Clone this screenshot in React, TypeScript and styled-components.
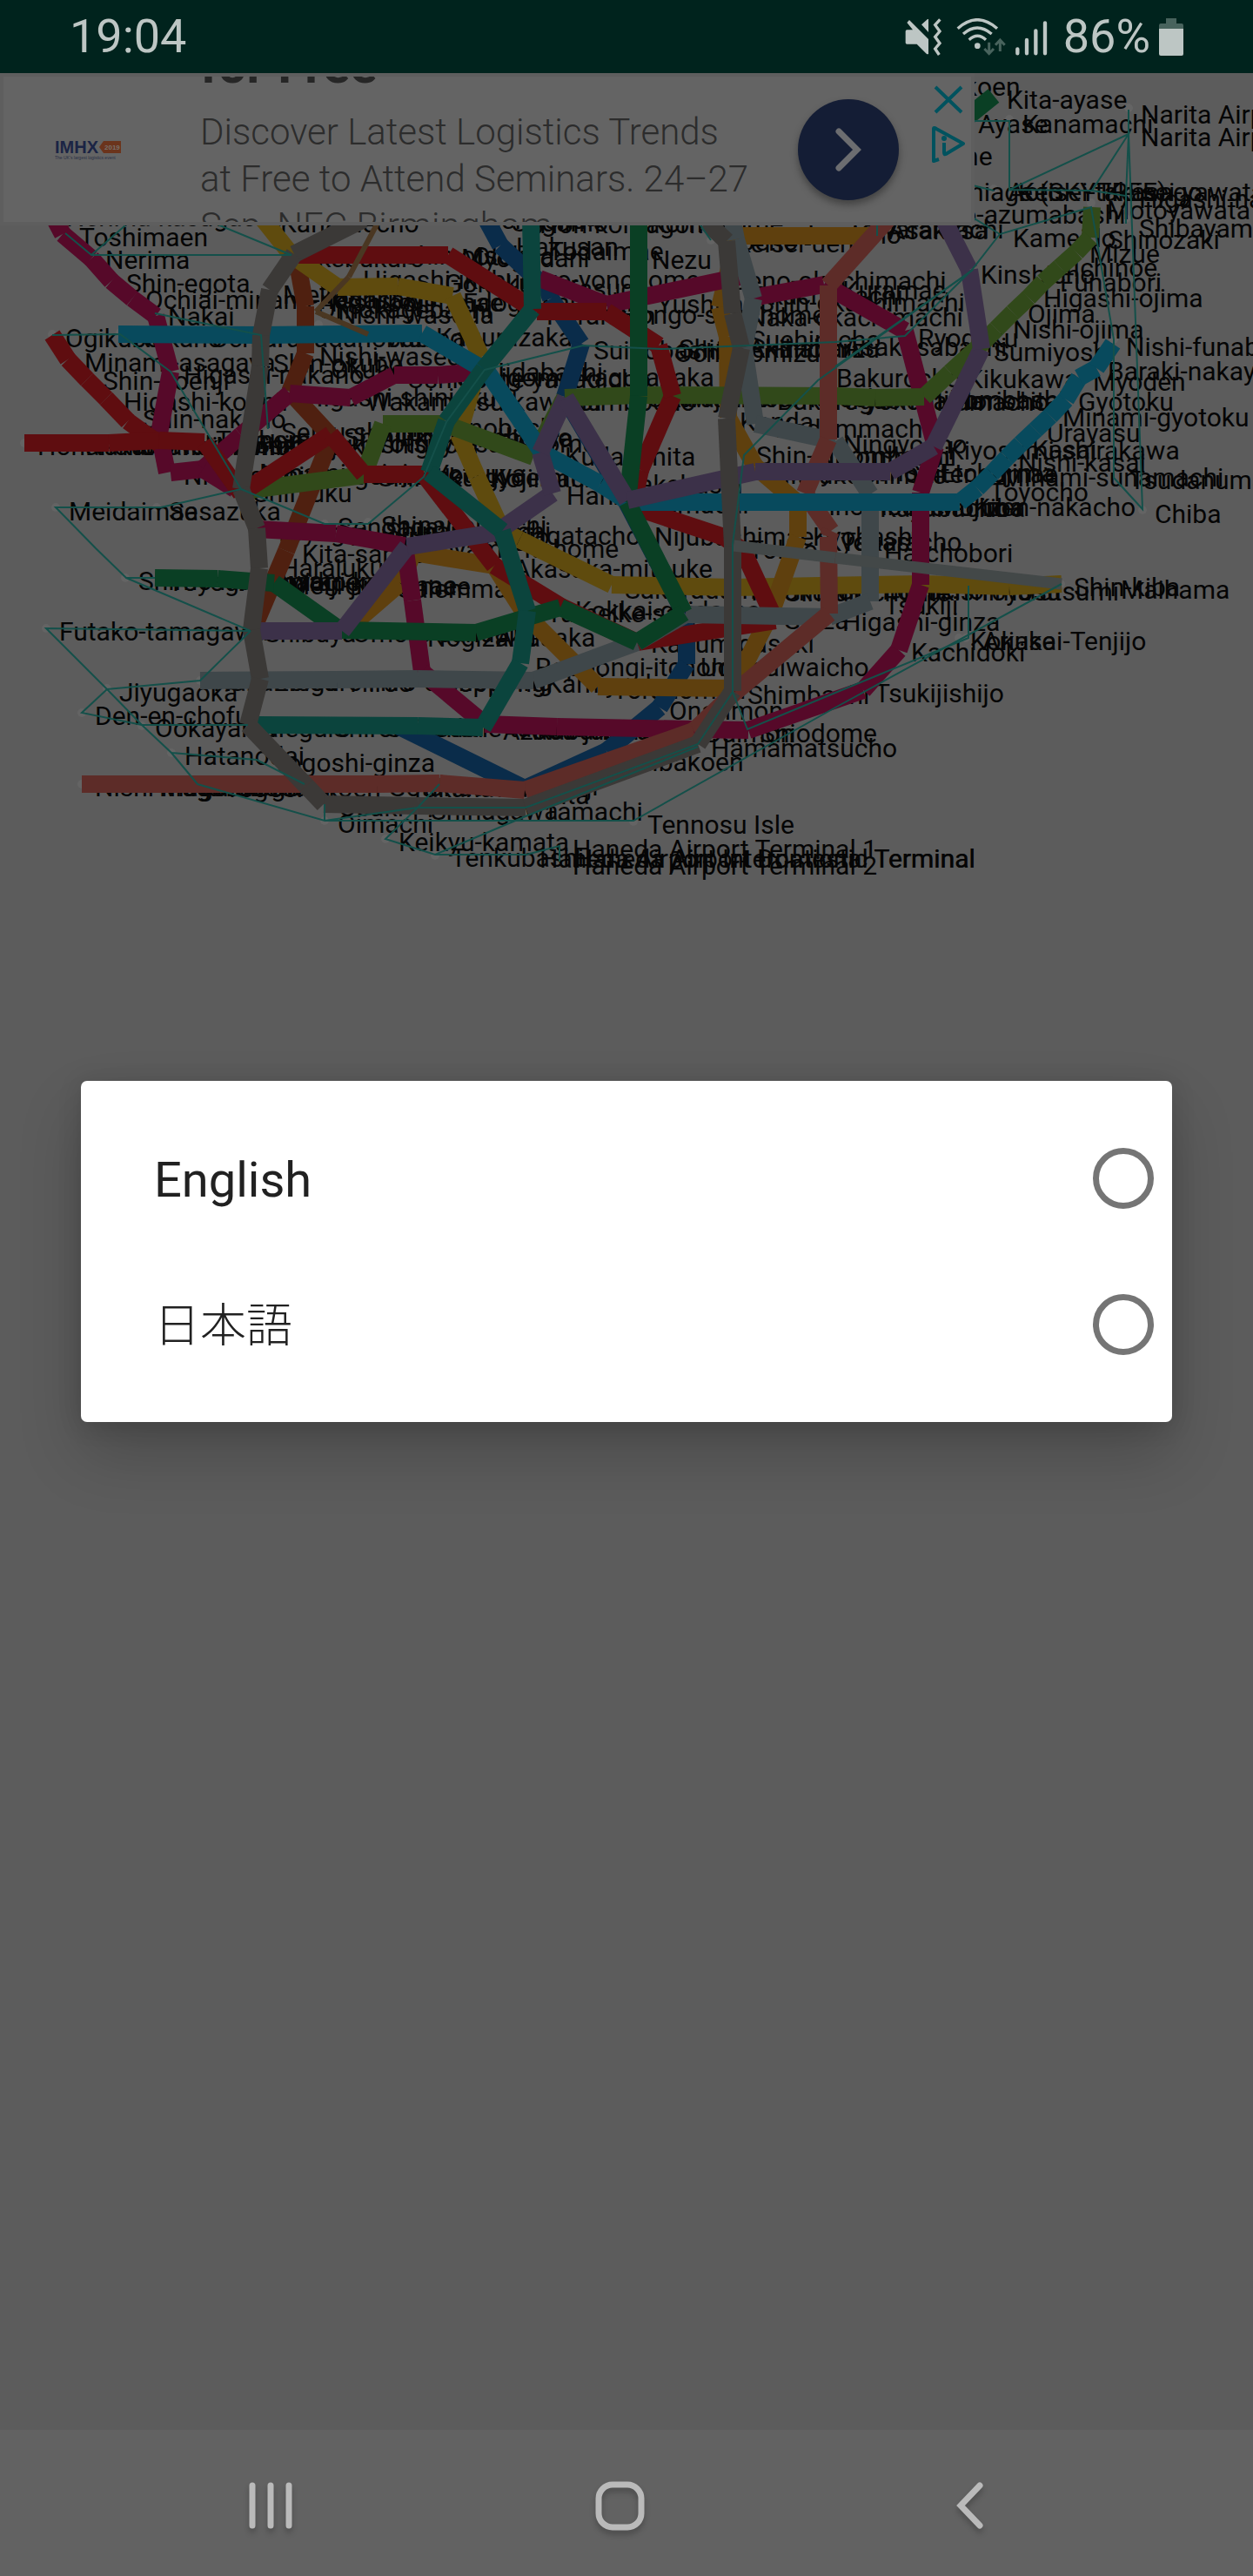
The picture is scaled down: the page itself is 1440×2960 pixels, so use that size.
import React, { useState } from "react";
import styled, { createGlobalStyle } from "styled-components";

const GlobalStyle = createGlobalStyle`
  *, *::before, *::after { box-sizing: border-box; }
  body { margin: 0; background: #5c5c5c; font-family: Roboto, "Noto Sans CJK JP", sans-serif; }
`;

const Screen = styled.div`
  display: flex;
  flex-direction: column;
  min-height: 100vh;
  overflow: hidden;
`;

const StatusBar = styled.header`
  display: flex;
  align-items: center;
  justify-content: space-between;
  height: 84px;
  padding: 0 80px;
  background: #00231d;
  color: #bdc6c4;
  font-size: 54px;
  line-height: 64px;
`;

const StatusGroup = styled.div`
  display: flex;
  align-items: center;
  gap: 10px;
`;

const Main = styled.main`
  position: relative;
  flex: 1;
  display: flex;
  flex-direction: column;
  justify-content: center;
`;

const MapLayer = styled.div`
  position: absolute;
  inset: 0;
  overflow: hidden;
`;

const MapSvg = styled.svg`
  display: block;
  width: 100%;
  height: auto;
`;

const MapLabel = styled.text`
  font: 400 30px Roboto, sans-serif;
  fill: #050505;
`;

const Banner = styled.aside`
  position: absolute;
  top: 0;
  left: 0;
  width: 1120px;
  padding: 4px;
  background: #5e5e5e;
`;

const Creative = styled.div`
  display: flex;
  align-items: center;
  height: 167px;
  padding: 0 6px 0 59px;
  overflow: hidden;
  background: #646464;
`;

const Copy = styled.div`
  display: flex;
  flex: 1;
  flex-direction: column;
  justify-content: center;
  gap: 18px;
  height: 167px;
  margin-left: 91px;
  padding-bottom: 14px;
`;

const AdTitle = styled.h2`
  flex: none;
  margin: 0;
  color: #262626;
  font-size: 58px;
  font-weight: 700;
  line-height: 64px;
`;

const AdText = styled.p`
  flex: none;
  margin: 0;
  color: #2c2c2c;
  font-size: 42px;
  font-weight: 300;
  line-height: 54px;
  white-space: nowrap;
`;

const CallButton = styled.button`
  display: grid;
  place-items: center;
  width: 116px;
  height: 116px;
  padding: 0;
  border: 0;
  border-radius: 50%;
  background: #141d35;
  box-shadow: 0 5px 8px rgba(0, 0, 0, 0.35);
`;

const AdTools = styled.div`
  display: flex;
  flex-direction: column;
  align-self: flex-start;
  align-items: center;
  gap: 14px;
  margin-left: 37px;
  padding-top: 10px;
`;

const PlainButton = styled.button`
  display: grid;
  place-items: center;
  padding: 0;
  border: 0;
  background: none;
`;

const Dialog = styled.form`
  position: relative;
  margin: 0 93px;
  padding: 28px 0;
  border-radius: 7px;
  background: #fff;
  box-shadow: 0 36px 72px rgba(0, 0, 0, 0.2), 0 4px 28px rgba(0, 0, 0, 0.14);
`;

const Option = styled.label`
  display: flex;
  align-items: center;
  justify-content: space-between;
  height: 168px;
  padding: 4px 21px 0 84px;
  color: #212121;
  font-size: 56px;
  line-height: 64px;

  &:lang(ja) {
    font-size: 53px;
    font-weight: 300;
  }
`;

const Radio = styled.input`
  appearance: none;
  width: 70px;
  height: 70px;
  margin: 0 0 4px;
  border: 7px solid #757575;
  border-radius: 50%;
  background: #fff;
  &:checked { background: radial-gradient(#757575 0 16px, #fff 17px); }
`;

const NavBar = styled.nav`
  display: flex;
  height: 168px;
  padding: 0 125px 0 110px;
  background: #626262;
`;

const NavButton = styled(PlainButton)`
  flex: 1;
  padding-top: 6px;
  svg { filter: drop-shadow(0 5px 3px rgba(0, 0, 0, 0.22)); overflow: visible; }
`;

type Points = number[][];
type Line = { color: string; width?: number; runs: Points[] };

const lines: Line[] = [
  { color: "#0a2c4a", runs: [[[555, 245], [575, 282], [629, 332], [633, 343], [668, 395], [649, 456], [720, 577], [786, 704], [789, 735], [789, 763], [758, 813], [697, 863], [603, 906], [457, 834]]] },
  { color: "#4f2010", runs: [[[341, 298], [351, 352], [351, 406], [333, 450], [381, 502], [329, 633], [290, 725]]] },
  { color: "#5f4b0e", runs: [[[297, 245], [335, 293], [388, 330], [457, 329], [520, 340], [553, 410], [527, 499], [548, 547], [577, 610], [597, 620], [703, 672], [843, 675], [943, 673], [1060, 671], [1160, 674], [1220, 671]]] },
  { color: "#5f400e", runs: [[[1008, 271], [847, 271], [827, 353], [836, 387], [837, 480], [868, 536], [917, 578], [917, 617], [886, 705], [842, 791], [687, 789], [603, 705], [568, 650], [475, 635], [460, 670], [394, 727]]] },
  { color: "#560929", runs: [
    [[62, 250], [72, 269], [105, 297], [128, 323], [152, 343], [179, 363], [196, 427], [183, 498], [192, 543]],
    [[196, 543], [233, 539], [277, 500], [333, 452], [403, 457], [453, 431], [503, 431], [555, 427]],
    [[233, 539], [270, 562]],
    [[295, 608], [386, 613], [465, 627], [474, 690], [485, 772], [557, 832], [640, 835], [795, 838], [860, 839], [992, 793], [1033, 747], [1058, 672], [1058, 566], [1075, 513], [1040, 380], [947, 327], [860, 343]],
    [[620, 320], [697, 350], [850, 318]],
  ] },
  { color: "#31491a", runs: [
    [[1255, 238], [1253, 273], [1237, 290], [1218, 307], [1199, 324], [1182, 342], [1164, 359], [1145, 378], [1123, 400], [1092, 428], [1062, 456], [1006, 457], [960, 455], [735, 454], [649, 457], [613, 525], [511, 487], [440, 487], [418, 546], [287, 563]],
  ] },
  { color: "#5f0d10", runs: [
    [[60, 385], [78, 413], [100, 436], [122, 458], [147, 484], [183, 510]],
    [[28, 509], [125, 509], [183, 506], [235, 508], [277, 567], [380, 499], [418, 545], [487, 545], [568, 650], [645, 697], [732, 738], [891, 713], [854, 633], [832, 617], [727, 582], [736, 540], [773, 455], [757, 397], [697, 358], [617, 358], [515, 293], [343, 293]],
  ] },
  { color: "#3f474a", runs: [[[841, 250], [846, 275], [866, 343], [855, 400], [868, 487], [960, 507], [1000, 568], [1000, 691], [953, 709], [788, 706], [732, 738], [613, 782], [480, 780], [387, 781], [230, 782]]] },
  { color: "#5d2c28", runs: [[[1022, 250], [952, 328], [952, 505], [925, 567], [955, 610], [952, 617], [953, 705], [845, 795], [797, 840], [603, 908], [505, 900], [433, 901], [94, 901]]] },
  { color: "#084a5d", runs: [[[136, 384], [300, 385], [485, 383], [560, 427], [623, 520], [690, 556], [723, 577], [860, 577], [1103, 577], [1123, 561], [1140, 544], [1157, 526], [1173, 510], [1190, 494], [1207, 478], [1225, 459], [1240, 434], [1260, 423], [1279, 395]]] },
  { color: "#0a3f24", runs: [
    [[1142, 110], [1090, 152]],
    [[734, 250], [734, 455], [721, 577], [786, 704], [732, 738], [644, 698], [547, 727], [391, 724], [315, 670], [250, 665], [178, 664]],
  ] },
  { color: "#3c3149", runs: [[[299, 725], [393, 725], [468, 628], [570, 612], [635, 567], [621, 520], [650, 457], [721, 575], [868, 542], [1023, 542], [1073, 513], [1128, 401], [1114, 310], [1086, 255]]] },
  { color: "#0b443d", runs: [[[610, 250], [612, 355], [556, 424], [513, 484], [493, 543], [577, 610], [606, 702], [598, 762], [555, 836], [480, 834], [295, 833]]] },
  { color: "#3b3937", runs: [[[418, 252], [338, 292], [310, 333], [300, 385], [299, 421], [277, 562], [295, 607], [298, 653], [289, 724], [299, 780], [285, 833], [352, 903], [372, 924], [480, 926], [604, 928], [802, 855], [842, 794], [842, 628], [835, 481], [852, 400], [842, 360], [835, 277], [812, 255]]] },
  { color: "#434848", width: 13, runs: [[[843, 627], [960, 641], [1220, 671]]] },
  { color: "#4a3722", width: 6, runs: [[[434, 256], [401, 318], [363, 358], [423, 384]]] },
];

const links: Points[] = [
  [[75, 268], [105, 293], [144, 259]],
  [[105, 293], [335, 293], [250, 258]],
  [[178, 360], [300, 385], [308, 493]],
  [[60, 385], [138, 384], [196, 427], [277, 562], [185, 583], [64, 583], [110, 630], [145, 664], [178, 664]],
  [[145, 664], [288, 725], [53, 722], [123, 792], [230, 782], [288, 725]],
  [[123, 792], [94, 819], [163, 833], [285, 833]],
  [[123, 792], [163, 833], [197, 865], [295, 873], [350, 901]],
  [[197, 865], [227, 901], [373, 943], [373, 924]],
  [[373, 943], [480, 928], [443, 964], [500, 982], [604, 938], [802, 858]],
  [[373, 943], [728, 943], [960, 813], [1220, 671]],
  [[505, 901], [480, 928], [604, 928], [802, 855], [842, 795], [842, 625], [855, 523], [940, 437], [1118, 310]],
  [[500, 982], [605, 982], [643, 972], [643, 990]],
  [[277, 562], [373, 602], [423, 602], [487, 548], [513, 485], [557, 425], [670, 397], [760, 401], [960, 393], [1040, 386], [1117, 310], [1149, 269], [1254, 238], [1280, 390], [1280, 549], [1313, 585], [1297, 154], [1297, 126]],
  [[960, 421], [1118, 310]],
  [[1149, 269], [1118, 250]],
  [[842, 795], [859, 838], [960, 796], [1113, 733], [1113, 673]],
  [[1120, 139], [1160, 139], [1160, 218], [1297, 154], [1255, 219], [1160, 218]],
  [[1255, 219], [1294, 225], [1294, 257]],
  [[1294, 225], [1297, 154]],
  [[1118, 213], [1142, 219]],
  [[803, 256], [817, 276]],
  [[1008, 256], [1008, 271]],
];

const dots: Points = [
  [60, 384], [138, 382], [28, 509], [64, 583], [180, 583], [308, 496], [144, 664], [53, 722], [123, 791], [94, 819], [163, 834], [197, 865], [94, 901], [230, 782],
  [373, 943], [443, 964], [500, 983], [728, 944], [817, 276], [1297, 124], [1160, 137], [1254, 233], [1142, 217], [1149, 267], [1294, 251], [1280, 390], [1280, 527], [1313, 586],
  [1102, 733], [1110, 733], [1219, 671], [1160, 671], [373, 602], [423, 600], [366, 373],
];

/* Station name, left edge, baseline. */
const labels: [string, number, number][] = [
  ["Nerima-kasugacho", 78, 260], ["Toshimaen", 93, 283], ["Nerima", 123, 309], ["Shin-egota", 147, 336], ["Ochiai-minami-nagasaki", 169, 355], ["Nakai", 195, 374],
  ["Ogikubo", 77, 399], ["Nakano", 155, 399], ["Ochiai", 244, 399], ["Takadanobaba", 315, 399], ["Waseda", 445, 399], ["Kanamecho", 324, 267], ["Ikebukuro", 359, 307],
  ["Minami-asagaya", 99, 427], ["Shin-koenji", 120, 448], ["Higashi-nakano", 213, 441], ["Higashi-koenji", 144, 472], ["Shin-nakano", 166, 492],
  ["Shin-okubo", 316, 428], ["Okubo", 382, 435], ["Nishi-waseda", 369, 420], ["Higashi-shinjuku", 352, 467], ["Wakamatsu-kawada", 423, 472],
  ["Honancho", 45, 523], ["Nakano-fujimicho", 100, 523], ["Nakano-shimbashi", 142, 523], ["Nakano-sakaue", 200, 522], ["Tochomae", 250, 516], ["Nishi-shinjuku", 250, 523], ["Shinjuku-nishiguchi", 294, 521],
  ["Seibu-shinjuku", 325, 507], ["Shinjuku-sanchome", 397, 513], ["Shinjuku-gyoemmae", 436, 559], ["Nishi-shinjuku-gochome", 213, 557], ["Shinjuku", 293, 577],
  ["Meidaimae", 81, 598], ["Sasazuka", 196, 598], ["Yoyogi", 317, 622], ["Sendagaya", 390, 616], ["Shinanomachi", 440, 614], ["Kokuritsu-kyogijo", 404, 627], ["Minami-shinjuku", 300, 554],
  ["Mejiro", 327, 349], ["Zoshigaya", 368, 352], ["Kishibojimmae", 382, 358], ["Higashi-ikebukuro-yonchome", 419, 332], ["Omokagebashi", 367, 366], ["Nishi-waseda", 390, 372], ["Edogawabashi", 534, 358], ["Gokokuji", 513, 336],
  ["Hakusan", 595, 294], ["Sengoku", 560, 263], ["Todaimae", 632, 299], ["Sugamo", 590, 266], ["Hon-komagome", 622, 268], ["Komagome", 748, 267], ["Myogadani", 532, 307], ["Otsuka", 545, 305], ["Shin-otsuka", 465, 304], ["Nezu", 751, 309],
  ["Hongo-sanchome", 714, 372], ["Korakuen", 630, 373], ["Kasuga", 648, 342], ["Yushima", 757, 360], ["Kagurazaka", 503, 398], ["Ushigome-yanagicho", 470, 446], ["Ushigome-kagurazaka", 526, 444], ["Iidabashi", 574, 438],
  ["Suidobashi", 684, 413], ["Ochanomizu", 777, 416], ["Shin-ochanomizu", 782, 411], ["Kudanshita", 651, 535], ["Jimbocho", 668, 472], ["Ogawamachi", 745, 468], ["Awajicho", 765, 468], ["Iwamotocho", 866, 468],
  ["Akebonobashi", 456, 502], ["Yotsuya-sanchome", 433, 520], ["Ichigaya", 550, 514], ["Yotsuya", 500, 555], ["Hanzomon", 653, 580], ["Kojimachi", 565, 560], ["Takebashi", 720, 567], ["Kanda", 852, 495], ["Shin-nihombashi", 871, 534], ["Mitsukoshimae", 884, 556],
  ["Otemachi", 734, 590], ["Nijubashimae", 754, 627], ["Nihombashi", 933, 592], ["Tokyo", 862, 642], ["Kyobashi", 936, 627], ["Nagatacho", 592, 626], ["Aoyama-itchome", 487, 641], ["Shinanomachi", 445, 621], ["Akasaka-mitsuke", 592, 664], ["Gaiemmae", 457, 687], ["Gaiemmae", 398, 684],
  ["Sakuradamon", 720, 688], ["Yurakucho", 860, 690], ["Ginza-itchome", 902, 691], ["Kokkai-gijidomae", 663, 712], ["Tameike-sanno", 630, 715], ["Hibiya", 795, 720], ["Ginza", 902, 723], ["Nogizaka", 493, 743], ["Akasaka", 572, 743], ["Kasumigaseki", 750, 750],
  ["Roppongi-itchome", 617, 777], ["Uchisaiwaicho", 807, 777], ["Kamiyacho", 629, 796], ["Roppongi", 510, 795], ["Toranomon", 706, 803], ["Shimbashi", 861, 809], ["Onarimon", 771, 827], ["Azabu-juban", 580, 850], ["Akabanebashi", 600, 850], ["Daimon", 812, 853], ["Shiodome", 875, 853], ["Hamamatsucho", 819, 870], ["Shibakoen", 717, 886],
  ["Mita", 620, 924], ["Tamachi", 626, 943], ["Shinagawa", 497, 942], ["Sengakuji", 560, 914], ["Gotanda", 448, 915], ["Takanawadai", 473, 916], ["Osaki", 391, 938], ["Oimachi", 390, 957], ["Keikyu-kamata", 460, 978], ["Tennosu Isle", 746, 958], ["Tenkubashi", 520, 996],
  ["Haneda Airport Terminal 1", 660, 986], ["Haneda Airport Terminal 2", 660, 1005], ["Haneda Airport International Terminal", 622, 997], ["Haneda Airport Domestic Terminal", 662, 997],
  ["Shimo-kitazawa", 161, 678], ["Yoyogi-uehara", 195, 679], ["Yoyogi-koen", 270, 679], ["Kita-sando", 349, 647], ["Harajuku", 324, 663], ["Meiji-jingumae", 332, 683], ["Yoyogi-koen", 310, 679], ["Futako-tamagawa", 70, 736], ["Shibuya", 306, 738], ["Omote-sando", 407, 738],
  ["Jiyugaoka", 139, 806], ["Nakameguro", 247, 794], ["Ebisu", 317, 794], ["Hiroo", 404, 795], ["Hiro-o shopping", 425, 794], ["Den-en-chofu", 111, 833], ["Ookayama", 180, 847], ["Meguro", 303, 847], ["Shirokanedai", 385, 847], ["Shirokane-takanawa", 446, 847], ["Hatanodai", 214, 879], ["Togoshi-ginza", 315, 887],
  ["Nishi-magome", 111, 915], ["Magome", 185, 915], ["Nakanobu", 220, 915], ["Togoshi", 280, 915], ["Togoshi-koen", 260, 916],
  ["Ueno", 850, 288], ["Keisei-ueno", 846, 290], ["Inaricho", 930, 280], ["Tawaramachi", 976, 274], ["Asakusa", 1023, 275], ["Ueno-okachimachi", 842, 333], ["Naka-okachimachi", 861, 375], ["Shin-okachimachi", 874, 358], ["Okachimachi", 866, 350], ["Kuramae", 970, 344],
  ["Suehirocho", 864, 401], ["Akihabara", 862, 411], ["Asakusabashi", 972, 409], ["Kodemmacho", 893, 503], ["Bakurocho", 963, 445], ["Bakuro-yokoyama", 895, 471], ["Higashi-nihombashi", 960, 470], ["Hamacho", 1078, 472], ["Morishita", 1093, 471], ["Kikukawa", 1113, 446], ["Ryogoku", 1057, 399],
  ["Ningyocho", 971, 521], ["Nihombashi", 940, 535], ["Kayabacho", 910, 553], ["Suitengumae", 1042, 555], ["Etchujima", 1082, 554], ["Kiyosumi-shirakawa", 1091, 528], ["Kayabacho", 1013, 594], ["Monzen-nakacho", 1078, 593], ["Etchujima", 1045, 593], ["Kiba", 1121, 594],
  ["Takaracho", 968, 633], ["Kyobashi", 950, 633], ["Hatchobori", 1018, 646], ["Shintomicho", 965, 689], ["Tsukishima", 1035, 690], ["Toyosu", 1125, 690], ["Tatsumi", 1180, 690], ["Shin-kiba", 1236, 685], ["Maihama", 1290, 688], ["Tsukiji", 1018, 706], ["Higashi-ginza", 970, 725],
  ["Ariake", 1131, 747], ["Kokusai-Tenjijo", 1117, 747], ["Kachidoki", 1049, 760], ["Tsukijishijo", 1007, 807],
  ["Nishiarai-koen", 984, 110], ["Kita-ayase", 1159, 125], ["Ayase", 1126, 153], ["Kanamachi", 1177, 153], ["Arakawa-nichome", 903, 190], ["Narita Airport Terminal 1", 1313, 142], ["Narita Airport Terminal 2", 1313, 168],
  ["Oshiage (SKYTREE)", 1080, 231], ["Aoto", 1160, 231], ["Keisei-takasago", 1172, 231], ["Keisei-yawata", 1272, 231], ["Higashi-nakayama", 1311, 239], ["Motoyawata", 1274, 252], ["Honjo-azumabashi", 1045, 257], ["Shibayama-Chiyoda", 1311, 273],
  ["Kameido", 1166, 284], ["Shinozaki", 1275, 286], ["Mizue", 1254, 302], ["Ichinoe", 1235, 318], ["Funabori", 1220, 335], ["Kinshicho", 1129, 326], ["Higashi-ojima", 1201, 353], ["Ojima", 1183, 371], ["Nishi-ojima", 1166, 389], ["Sumiyoshi", 1144, 415],
  ["Nishi-funabashi", 1296, 409], ["Baraki-nakayama", 1275, 437], ["Myoden", 1258, 449], ["Gyotoku", 1241, 472], ["Minami-gyotoku", 1223, 490], ["Urayasu", 1205, 508], ["Kasai", 1188, 527], ["Nishi-kasai", 1172, 542], ["Minami-sunamachi", 1153, 559], ["Toyocho", 1139, 576], ["Tsudanuma", 1300, 562], ["Chiba", 1329, 601],
];

function RailMap() {
  return (
    <MapSvg viewBox="0 84 1440 940" role="img" aria-label="Tokyo railway map">
      {dots.map(([x, y], i) => <circle key={i} cx={x} cy={y} r="5" fill="#646464" />)}
      {labels.map(([name, x, y], i) => <MapLabel key={i} x={x - 2} y={y}>{name}</MapLabel>)}
      {lines.map((line, l) => (
        <g key={l} stroke={line.color} strokeWidth={line.width ?? 20}>
          {line.runs.map((run) =>
            run.slice(1).map((p, i) => (
              <line key={`${p}-${i}`} x1={run[i][0]} y1={run[i][1]} x2={p[0]} y2={p[1]} />
            ))
          )}
        </g>
      ))}
      <g fill="none" stroke="#14504a" strokeWidth="2">
        {links.map((run, i) => <polyline key={i} points={run.join(" ")} />)}
      </g>
    </MapSvg>
  );
}

function StatusIcons() {
  return (
    <>
      <svg width="43" height="43" viewBox="120 57 129 129" fill="#bdc6c4" aria-label="Sound off, vibrate">
        <path d="M122 102q0-5 5-5h20L127 72l8-9 66 66v50q-2 3-7 0l-33-33h-34q-5 0-5-5zM177 79l21-19h3v45z" />
        <path d="M241 61l-17 19 16 22-16 19 16 22-16 19 14 21" fill="none" stroke="#bdc6c4" strokeWidth="10" />
      </svg>
      <svg width="63" height="43" viewBox="279 57 189 129" fill="none" stroke="#bdc6c4" strokeWidth="10" aria-label="Wi-Fi">
        <path d="M302 92q67-60 136 0M321 111q48-42 98 0M341 131q29-26 58 0" />
        <circle cx="370" cy="152" r="10" fill="#bdc6c4" stroke="none" />
        <path d="M410 140v38M394 162l16 17 16-17M448 171v-39M432 149l16-17 16 17" stroke="#48635d" strokeWidth="9" />
      </svg>
      <svg width="46" height="43" viewBox="498 57 138 129" stroke="#bdc6c4" strokeWidth="13" strokeLinecap="round" aria-label="Mobile signal">
        <path d="M508 163v15M540 132v46M571 100v78M603 73v105" />
      </svg>
    </>
  );
}

function ImhxLogo() {
  return (
    <svg width="76" height="26" viewBox="0 0 76 26" aria-label="IMHX 2019" fontFamily="Liberation Sans, sans-serif">
      <path d="M51 10l5-7h20v14H56z" fill="#6b341c" />
      <text x="0" y="17" fontSize="20" fontWeight="700" fill="#1b2445">IMHX</text>
      <text x="57" y="13" fontSize="8" fontWeight="700" fill="#77706b">2019</text>
      <text x="0" y="24" fontSize="5" fill="#2a3045">The UK's largest logistics event</text>
    </svg>
  );
}

const languages = [
  { code: "en", name: "English" },
  { code: "ja", name: "日本語" },
];

export default function App() {
  const [language, setLanguage] = useState("");
  return (
    <Screen>
      <GlobalStyle />
      <StatusBar>
        <time>19:04</time>
        <StatusGroup>
          <StatusIcons />
          <span>86%</span>
          <svg width="28" height="43" viewBox="0 0 28 43" aria-label="Battery">
            <path d="M8 0h12v6h6q2 0 2 2v5H0V8q0-2 2-2h6z" fill="#48635d" />
            <path d="M0 12h28v29q0 2-2 2H2q-2 0-2-2z" fill="#bdc6c4" />
          </svg>
        </StatusGroup>
      </StatusBar>
      <Main>
        <MapLayer>
          <RailMap />
        </MapLayer>
        <Banner>
          <Creative>
            <ImhxLogo />
            <Copy>
              <AdTitle>for Free</AdTitle>
              <AdText>
                Discover Latest Logistics Trends<br />
                at Free to Attend Seminars. 24–27<br />
                Sep, NEC Birmingham
              </AdText>
            </Copy>
            <CallButton type="button" aria-label="Open">
              <svg width="30" height="50" viewBox="0 0 30 50" fill="none" stroke="#6c6d70" strokeWidth="7" strokeLinecap="round">
                <path d="M4 4l21 21L4 46" />
              </svg>
            </CallButton>
            <AdTools>
              <PlainButton type="button" aria-label="Close ad">
                <svg width="34" height="33" viewBox="0 0 34 33" stroke="#00525e" strokeWidth="4">
                  <path d="M2 2l30 29M32 2L2 31" />
                </svg>
              </PlainButton>
              <PlainButton type="button" aria-label="Ad choices">
                <svg width="40" height="42" viewBox="0 0 40 42" fill="none" stroke="#00525e" strokeWidth="4" strokeLinejoin="round">
                  <path d="M9 38l-6 2V3q0-2 3 0l31 17-20 12q-2 1-2-2V19" />
                  <circle cx="15" cy="14" r="3" fill="#00525e" stroke="none" />
                </svg>
              </PlainButton>
            </AdTools>
          </Creative>
        </Banner>
        <Dialog aria-label="Language">
          {languages.map(({ code, name }) => (
            <Option key={code} lang={code}>
              {name}
              <Radio type="radio" name="language" checked={language === code} onChange={() => setLanguage(code)} />
            </Option>
          ))}
        </Dialog>
      </Main>
      <NavBar>
        <NavButton type="button" aria-label="Recent apps">
          <svg width="50" height="54" viewBox="0 0 50 54" stroke="#bababa" strokeWidth="7" strokeLinecap="round">
            <path d="M4 4v46M25 4v46M46 4v46" />
          </svg>
        </NavButton>
        <NavButton type="button" aria-label="Home">
          <svg width="57" height="57" viewBox="0 0 57 57" fill="none" stroke="#bababa" strokeWidth="7">
            <rect x="4" y="4" width="49" height="49" rx="16" />
          </svg>
        </NavButton>
        <NavButton type="button" aria-label="Back">
          <svg width="31" height="54" viewBox="0 0 31 54" fill="none" stroke="#bababa" strokeWidth="7" strokeLinecap="round">
            <path d="M27 4L5 27l22 23" />
          </svg>
        </NavButton>
      </NavBar>
    </Screen>
  );
}
